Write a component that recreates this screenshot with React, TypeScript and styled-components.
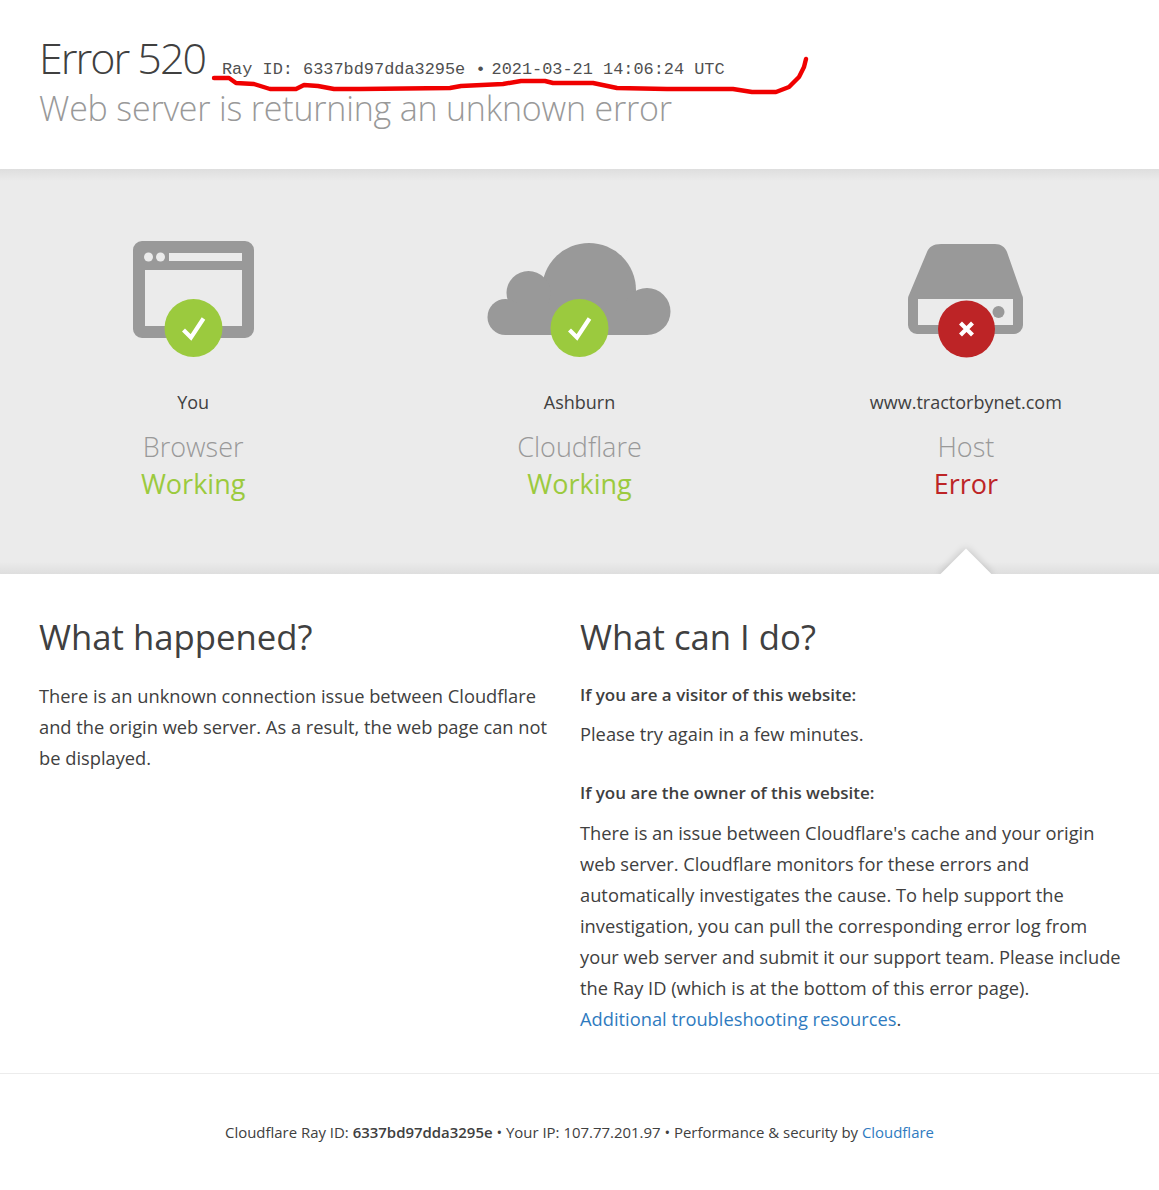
import React from "react";
import styled, { createGlobalStyle } from "styled-components";

const Global = createGlobalStyle`
  html, body { margin: 0; padding: 0; background: #fff; }
  body { font-family: "Open Sans", "Liberation Sans", sans-serif; color: #404040; }
`;

const Page = styled.div`
  width: 1159px;
  height: 1190px;
  overflow: hidden;
`;

const Header = styled.header`
  position: relative;
  height: 169px;
  padding: 32px 0 0 39px;
  box-sizing: border-box;
`;

const TitleRow = styled.div`
  display: flex;
  align-items: baseline;
  height: 51px;
`;

const Title = styled.h1`
  margin: 0;
  font-size: 43px;
  line-height: 51px;
  font-weight: 300;
  letter-spacing: -2px;
  color: #404040;
`;

const RayStamp = styled.span`
  margin-left: 17px;
  font-family: "Liberation Mono", monospace;
  font-size: 16.9px;
  color: #505050;
  white-space: pre;
`;

const StampBullet = styled.span`
  margin-right: 6px;
`;

const Subtitle = styled.h2`
  margin: 2px 0 0;
  font-size: 34px;
  line-height: 46px;
  font-weight: 300;
  letter-spacing: -0.2px;
  color: #999;
`;

const Scribble = styled.svg`
  position: absolute;
  left: 0;
  top: 0;
  pointer-events: none;
`;

const Diagram = styled.section`
  display: grid;
  grid-template-columns: repeat(3, 1fr);
  height: 405px;
  overflow: hidden;
  background-image: linear-gradient(#dedede, #ebebeb 3%, #ebebeb 97%, #dedede);
`;

const Node = styled.div`
  position: relative;
  display: flex;
  flex-direction: column;
  align-items: center;
  padding-top: 69px;
`;

const NodeIcon = styled.svg`
  display: block;
  width: 200px;
  height: 130px;
`;

const NodeName = styled.div`
  margin-top: 21px;
  font-size: 18px;
  line-height: 26px;
  color: #404040;
`;

const NodeKind = styled.div`
  margin-top: 13px;
  font-size: 27px;
  line-height: 37px;
  font-weight: 300;
  color: #999;
`;

const NodeStatus = styled.div<{ $error?: boolean }>`
  font-size: 27px;
  line-height: 37px;
  font-weight: 400;
  color: ${(p) => (p.$error ? "#bd2426" : "#9bca3e")};
`;

const Notch = styled.div`
  position: absolute;
  left: 50%;
  bottom: -18px;
  width: 36px;
  height: 36px;
  margin-left: -18px;
  background: #fff;
  transform: rotate(45deg);
  box-shadow: 0 0 8px rgba(0, 0, 0, 0.2);
`;

const Explain = styled.section`
  display: grid;
  grid-template-columns: 541px 1fr;
  height: 500px;
  padding: 38px 0 0 39px;
  box-sizing: border-box;
  border-bottom: 1px solid #ececec;
`;

const ColumnLeft = styled.div`
  width: 520px;
`;

const ColumnRight = styled.div`
  width: 545px;
`;

const Heading = styled.h2`
  margin: 0 0 17px;
  font-size: 34.7px;
  line-height: 50px;
  font-weight: 400;
  color: #404040;
`;

const Paragraph = styled.p<{ $gap?: number; $nudge?: number }>`
  margin: 0 0 ${(p) => p.$gap ?? 0}px;
  padding-top: ${(p) => p.$nudge ?? 0}px;
  font-size: 18.3px;
  line-height: 31px;
  color: #404040;
`;

const Strong = styled.p<{ $gap?: number }>`
  margin: 0 0 ${(p) => p.$gap ?? 0}px;
  font-size: 17px;
  line-height: 31px;
  font-weight: 600;
  color: #404040;
`;

const Link = styled.a`
  color: #2f7bbf;
  text-decoration: none;
`;

const Footer = styled.footer`
  display: flex;
  justify-content: center;
  padding-top: 45px;
  font-size: 14.95px;
  line-height: 26px;
  color: #404040;
`;

const FooterStrong = styled.strong`
  font-weight: 600;
`;

const Check = () => (
  <path d="M90.5 92l7.5 7.5 12.5-19" fill="none" stroke="#fff" strokeWidth="4.2" />
);

const scribble =
  "214,78 229,78 236,83 254,84 270,89 296,89 304,85 318,86 334,89 360,89 450,88 461,86 503,84 521,81 545,81 553,83 593,83 617,88 667,89 733,89 752,92 776,92 789,87 799,77 804,67 806,59";

export default function App() {
  return (
    <Page>
      <Global />
      <Header>
        <TitleRow>
          <Title>Error 520</Title>
          <RayStamp>
            Ray ID: 6337bd97dda3295e <StampBullet>•</StampBullet>2021-03-21 14:06:24 UTC
          </RayStamp>
        </TitleRow>
        <Subtitle>Web server is returning an unknown error</Subtitle>
        <Scribble width="830" height="110" viewBox="0 0 830 110" aria-hidden="true">
          <polyline
            points={scribble}
            fill="none"
            stroke="#f00000"
            strokeWidth="4.4"
            strokeLinejoin="round"
            strokeLinecap="round"
          />
        </Scribble>
      </Header>
      <Diagram>
        <Node>
          <NodeIcon viewBox="0 0 200 130">
            <path
              fillRule="evenodd"
              fill="#999"
              d="M49 3h103a9 9 0 0 1 9 9v79a9 9 0 0 1-9 9H49a9 9 0 0 1-9-9V12a9 9 0 0 1 9-9zM52 32v56h97V32zM76 15v8h73v-8z"
            />
            <circle cx="55.5" cy="19" r="4.5" fill="#ebebeb" />
            <circle cx="67.5" cy="19" r="4.5" fill="#ebebeb" />
            <circle cx="100.5" cy="90" r="29" fill="#9bca3e" />
            <Check />
          </NodeIcon>
          <NodeName>You</NodeName>
          <NodeKind>Browser</NodeKind>
          <NodeStatus>Working</NodeStatus>
        </Node>
        <Node>
          <NodeIcon viewBox="0 0 200 130">
            <g fill="#999">
              <circle cx="110" cy="52" r="47" />
              <circle cx="49.5" cy="55" r="22" />
              <circle cx="26.5" cy="79" r="18" />
              <circle cx="168" cy="73.5" r="23.5" />
              <rect x="26.5" y="65" width="141.5" height="32" />
            </g>
            <circle cx="100.5" cy="90" r="29" fill="#9bca3e" />
            <Check />
          </NodeIcon>
          <NodeName>Ashburn</NodeName>
          <NodeKind>Cloudflare</NodeKind>
          <NodeStatus>Working</NodeStatus>
        </Node>
        <Node>
          <NodeIcon viewBox="0 0 200 130">
            <path
              fillRule="evenodd"
              fill="#999"
              d="M75 6h54c6 0 10 3 12 8l15 43c1 2 1 3 1 5v25a9 9 0 0 1-9 9H51a9 9 0 0 1-9-9V62c0-2 0-3 1-5l18-43c2-5 6-8 14-8zM52 61v26h95V61z"
            />
            <circle cx="132.5" cy="74" r="6" fill="#999" />
            <circle cx="100.5" cy="91" r="28.5" fill="#bd2426" />
            <path d="M94.5 85l12 12M106.5 85l-12 12" fill="none" stroke="#fff" strokeWidth="4.2" />
          </NodeIcon>
          <NodeName>www.tractorbynet.com</NodeName>
          <NodeKind>Host</NodeKind>
          <NodeStatus $error>Error</NodeStatus>
          <Notch />
        </Node>
      </Diagram>
      <Explain>
        <ColumnLeft>
          <Heading>What happened?</Heading>
          <Paragraph $nudge={1}>
            There is an unknown connection issue between Cloudflare and the origin web server. As a result, the web page can not be displayed.
          </Paragraph>
        </ColumnLeft>
        <ColumnRight>
          <Heading>What can I do?</Heading>
          <Strong $gap={8}>If you are a visitor of this website:</Strong>
          <Paragraph $gap={28}>Please try again in a few minutes.</Paragraph>
          <Strong $gap={9}>If you are the owner of this website:</Strong>
          <Paragraph>
            There is an issue between Cloudflare's cache and your origin web server. Cloudflare monitors for these errors and automatically investigates the cause. To help support the investigation, you can pull the corresponding error log from your web server and submit it our support team. Please include the Ray ID (which is at the bottom of this error page).
            <br />
            <Link href="#">Additional troubleshooting resources</Link>.
          </Paragraph>
        </ColumnRight>
      </Explain>
      <Footer>
        <span>
          Cloudflare Ray ID: <FooterStrong>6337bd97dda3295e</FooterStrong> • Your IP: 107.77.201.97 • Performance &amp; security by <Link href="#">Cloudflare</Link>
        </span>
      </Footer>
    </Page>
  );
}
